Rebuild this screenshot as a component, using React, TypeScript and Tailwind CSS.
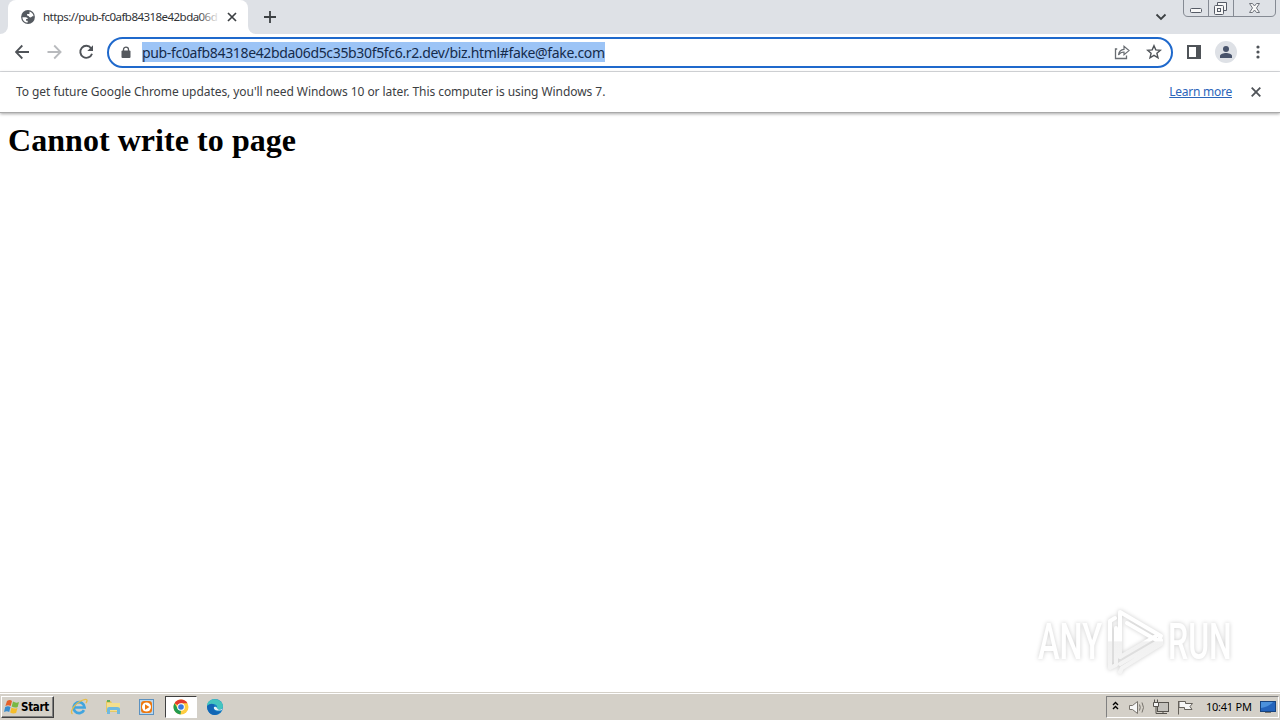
import React from "react";

const UI_FONT = "font-['Noto_Sans','Open_Sans',sans-serif]";

const TabStrip = () => (
  <div className="flex h-[34px] bg-[#dee1e6]">
    <div className="flex w-2 items-end bg-white">
      <div className="h-full w-full rounded-br-lg bg-[#dee1e6]" />
    </div>
    <div className="flex w-60 items-center rounded-t-lg bg-white pl-[13px]">
      <svg width="14" height="14" viewBox="0 0 14 14" className="shrink-0">
        <circle cx="7" cy="7" r="6.9" fill="#555a60" />
        <path
          d="M1.4 7.2H4.8C6 7.2 6.8 8 6.8 9.1H5.1V10.7H6.7V12.6C3.7 12.6 1.4 10.2 1.4 7.2ZM8.6 1.6C10.8 2.3 12.3 4 12.6 6.3H11.1C10.6 8.1 7.8 7.5 7.7 6.1C6.1 6.2 5.6 5 6.2 4.1H8.4Z"
          fill="#fff"
        />
      </svg>
      <div className="relative ml-2 w-[175px] whitespace-nowrap text-[11.5px] leading-4 tracking-[-0.54px] text-[#303236]">
        https://pub-fc0afb84318e42bda06d
        <div className="absolute inset-y-0 right-0 w-5 bg-gradient-to-r from-transparent to-white/90" />
      </div>
      <svg width="10" height="10" viewBox="0 0 10 10" className="ml-[9px] shrink-0">
        <path d="M1 1L9 9M9 1L1 9" stroke="#3c4043" strokeWidth="1.7" />
      </svg>
    </div>
    <div className="w-2 bg-white">
      <div className="h-full w-full rounded-bl-lg bg-[#dee1e6]" />
    </div>
    <svg width="12" height="12" viewBox="0 0 12 12" className="mt-[11px] ml-2">
      <path d="M6 0V12M0 6H12" stroke="#3c4043" strokeWidth="1.8" />
    </svg>
    <svg width="12" height="8" viewBox="0 0 12 8" className="mt-[13px] ml-auto">
      <path d="M1.5 1.5L6 6L10.5 1.5" fill="none" stroke="#3c4043" strokeWidth="1.8" />
    </svg>
    <svg width="93" height="17" viewBox="0 0 93 17" className="mr-1 ml-4" fill="none">
      <path d="M.5 0V12Q.5 16.5 5 16.5H88Q92.5 16.5 92.5 12V0M25.5 0V16M50.5 0V16" stroke="#858a93" />
      <rect x="7.5" y="8.5" width="11" height="4" rx="1" fill="#f7f7f7" stroke="#565b66" />
      <path d="M34.5 5.5V2.5H43.5V10.5H40.5" fill="#f7f7f7" stroke="#565b66" />
      <rect x="31.5" y="5.5" width="9" height="9" rx="1" fill="#f7f7f7" stroke="#565b66" />
      <rect x="34.5" y="8.5" width="3" height="3" stroke="#565b66" />
      <path
        d="M66.5 3.5H69.5L71.5 6L73.5 3.5H76.5L73.5 8L76.5 12.5H73.5L71.5 10L69.5 12.5H66.5L69.5 8Z"
        fill="#f7f7f7"
        stroke="#70747c"
      />
    </svg>
  </div>
);

const Toolbar = () => (
  <div className="flex h-[38px] items-center border-b border-[#dadce0] bg-white pl-[15px]">
    <svg width="80" height="16" viewBox="0 0 80 16" fill="none" className="mb-px shrink-0">
      <path d="M14 8H1M7.3 1.5L.9 8L7.3 14.5" stroke="#4f5358" strokeWidth="1.8" />
      <path d="M32.5 8H45.3M39.2 1.5L45.6 8L39.2 14.5" stroke="#b8babd" strokeWidth="1.8" />
      <path d="M76.1 4.2A6 6 0 1 0 77 9.7" stroke="#4f5358" strokeWidth="1.9" />
      <path d="M78 1.3V7H72.3Z" fill="#4f5358" />
    </svg>
    <div className="ml-3 flex h-[31px] w-[1066px] shrink-0 items-center rounded-full border-2 border-[#1f69cc] pl-3">
      <svg width="10" height="13" viewBox="0 0 10 13" className="mb-px shrink-0">
        <path d="M2.5 5V3.4C2.5 .3 7.5 .3 7.5 3.4V5" fill="none" stroke="#55595e" strokeWidth="1.3" />
        <rect y="4.5" x=".5" width="9" height="7.5" rx="1" fill="#55595e" />
      </svg>
      <span className="mb-px ml-[11px] h-5 w-[463px] whitespace-nowrap bg-[#9cc4f6] text-[14px] leading-[21px] tracking-[-0.34px] text-[#152b4b]">
        pub-fc0afb84318e42bda06d5c35b30f5fc6.r2.dev/biz.html#fake@fake.com
      </span>
      <svg width="16" height="16" viewBox="0 0 16 16" fill="none" className="mr-4 mb-px ml-auto">
        <path d="M3.2 5H1.5V14.5H12.5V11.5" stroke="#696d72" strokeWidth="1.3" />
        <path d="M4.5 11C5 7 7.5 5.4 10 5.3V2.3L15 6.6L10 10.8V8C7.5 8 5.8 9 4.5 11Z" stroke="#696d72" strokeWidth="1.2" />
      </svg>
      <svg width="16" height="16" viewBox="0 0 16 16" fill="none" className="mr-[9px] mb-px">
        <path
          d="M8 1.7L9.8 5.9L14.4 6.3L10.9 9.3L12 13.8L8 11.4L4 13.8L5.1 9.3L1.6 6.3L6.2 5.9Z"
          stroke="#4f5358"
          strokeWidth="1.4"
        />
      </svg>
    </div>
    <svg width="14" height="14" viewBox="0 0 14 14" className="mb-px ml-[14px]">
      <path d="M0 0H14V14H0ZM2 2V12H9V2Z" fill="#4f5358" fillRule="evenodd" />
    </svg>
    <svg width="22" height="22" viewBox="0 0 22 22" className="mb-px ml-[14px]">
      <circle cx="11" cy="11" r="11" fill="#dee1e6" />
      <circle cx="11" cy="8" r="3" fill="#48536b" />
      <path d="M5 17V15C5 13 8.5 12 11 12S17 13 17 15V17Z" fill="#48536b" />
    </svg>
    <svg width="4" height="14" viewBox="0 0 4 14" className="mb-px ml-[19px]" fill="#4f5358">
      <circle cx="2" cy="2" r="1.6" />
      <circle cx="2" cy="7" r="1.6" />
      <circle cx="2" cy="12" r="1.6" />
    </svg>
  </div>
);

const InfoBar = () => (
  <div className="flex h-[41px] items-center border-b border-[#a9a9a9] bg-white pl-4 text-[12px] leading-4 shadow-[0_1px_3px_rgba(0,0,0,0.35)]">
    <span className="mb-px whitespace-nowrap tracking-[-0.06px] text-[#3c4043]">
      To get future Google Chrome updates, you'll need Windows 10 or later. This computer is using Windows 7.
    </span>
    <a className="mr-[19px] mb-px ml-auto whitespace-nowrap tracking-[-0.25px] text-[#2b65ba] underline">Learn more</a>
    <svg width="10" height="10" viewBox="0 0 10 10" className="mr-[19px]">
      <path d="M.7 .7L9.3 9.3M9.3 .7L.7 9.3" stroke="#4f5358" strokeWidth="1.8" />
    </svg>
  </div>
);

const Watermark = () => (
  <svg
    width="204"
    height="68"
    viewBox="0 0 204 68"
    className="absolute right-[42px] bottom-[17px] drop-shadow-[0_0_2px_rgba(0,0,0,0.2)]"
    fill="none"
  >
    <defs>
      <linearGradient id="fade" x1="0" y1="0" x2="0" y2="68" gradientUnits="userSpaceOnUse">
        <stop offset="0.48" stopColor="#fff" />
        <stop offset="0.5" stopColor="#f1f1f1" />
        <stop offset="1" stopColor="#f5f5f5" />
      </linearGradient>
    </defs>
    <g fill="url(#fade)" fontFamily="Roboto, sans-serif" fontSize="50" fontWeight="500">
      <text transform="translate(4 51) scale(.65 1)">ANY</text>
      <text transform="translate(134 51) scale(.64 1)">RUN</text>
    </g>
    {/* Two nested play outlines */}
    <g stroke="url(#fade)" strokeWidth="4" strokeLinecap="round" strokeLinejoin="round">
      <path d="M86 49V4L127 28L124 33L93 15" />
      <path d="M81 10L76 13V60L82 57V20" />
      <path d="M86 49L122 28M86 56L127 32V36L88 60L86 64" />
    </g>
  </svg>
);

const TaskBar = () => (
  <div className="flex h-[27px] items-center border-t border-white bg-[#d4d0c8] shadow-[0_-1px_0_#d4d0c8]">
    <div className="ml-px flex h-[22px] w-[53px] shrink-0 items-center border border-t-white border-r-[#404040] border-b-[#404040] border-l-white pl-[2px] shadow-[inset_-1px_-1px_#808080]">
      <svg width="16" height="16" viewBox="0 0 16 16" className="shrink-0">
        <path d="M3 2Q6 .2 8 2L6.7 7Q4 5.7 1.4 7Z" fill="#e56028" />
        <path d="M9 2.5Q12 4.5 15 3L13.7 8Q11 9.3 7.7 7.5Z" fill="#79b843" />
        <path d="M1.2 8Q4 6.6 6.5 8L5.2 13Q3 11.7 0 13Z" fill="#388cce" />
        <path d="M7.5 8.5Q10 10.4 13.5 9L12.1 14Q9 15.2 6.2 13.5Z" fill="#f5bd2b" />
      </svg>
      <span className="ml-px pt-px font-['DejaVu_Sans_Condensed','DejaVu_Sans',sans-serif] text-[11.5px] font-bold tracking-[-0.3px] text-black">
        Start
      </span>
    </div>
    {/* Internet Explorer */}
    <svg width="18" height="18" viewBox="0 0 18 18" className="ml-4 shrink-0" fill="none">
      <path d="M14 12.2A5.5 5.5 0 1 1 14.6 9.5H4.5" stroke="#41a5df" strokeWidth="2.7" />
      <path d="M2.5 16C-1 14 5 5 13 2C18 0 17.5 3 16 5" stroke="#e6bd48" strokeWidth="1.3" />
    </svg>
    {/* Windows Explorer */}
    <svg width="18" height="18" viewBox="0 0 18 18" className="ml-4 shrink-0">
      <path d="M2 3H7L8 5H15V14H2Z" fill="#e5c965" />
      <path d="M3 2H6V4H3Z" fill="#62ac58" />
      <path d="M3 5H16V13H3Z" fill="#f5df8d" />
      <path d="M3 16V11Q3 9 5 9H13Q16 9 16 11V16H13V12H6V16Z" fill="#70b9df" />
    </svg>
    {/* Media Player */}
    <svg width="18" height="18" viewBox="0 0 18 18" className="ml-4 shrink-0">
      <rect x="1.5" y="1.5" width="14" height="15" fill="#b9d8ef" stroke="#5b91c0" />
      <rect x="3" y="3" width="11" height="12" rx="3" fill="#ed780f" />
      <circle cx="8.5" cy="9" r="4.5" fill="#fff" />
      <path d="M7 6.2V11.8L11.5 9Z" fill="#ed780f" />
    </svg>
    <div className="ml-[9px] flex h-[22px] w-8 shrink-0 items-center justify-center border border-t-[#404040] border-r-white border-b-white border-l-[#404040] bg-white">
      <svg width="16" height="16" viewBox="0 0 16 16">
        <circle cx="8" cy="8" r="7.5" fill="#ffcd40" />
        <path d="M8 8L1.5 4.2A7.5 7.5 0 0 1 14.5 4.2H8Z" fill="#e33b2e" />
        <path d="M1.5 4.2L5 10L8 11.5L7.5 15.5A7.5 7.5 0 0 1 1.5 4.2Z" fill="#229b50" />
        <circle cx="8" cy="8" r="3.8" fill="#fff" />
        <circle cx="8" cy="8" r="2.8" fill="#3979df" />
      </svg>
    </div>
    {/* Edge */}
    <svg width="18" height="18" viewBox="0 0 18 18" className="ml-[9px]">
      <circle cx="9" cy="9" r="8" fill="#1683c6" />
      <path d="M1 8C1-1 16-1 17 8C17 12 12 13 11 10C12 7 8 4 1 8Z" fill="#44c5bf" />
      <path d="M1 8C5 4 10 6 8 9C7 14 12 14 15.5 13C9 21 1 16 1 8Z" fill="#1266b5" />
      <path d="M8 9C7 12 11 13.5 16 12L17 9C17 12 12 13 11 10Q10 8 8 9Z" fill="#e8f4f6" />
    </svg>
    <div className="mr-px ml-auto flex h-[22px] w-[173px] items-center border border-t-[#808080] border-r-white border-b-white border-l-[#808080]">
      <svg width="90" height="18" viewBox="0 0 90 18" fill="none" className="shrink-0">
        <path d="M6 7L8.5 4.5L11 7M6 11L8.5 8.5L11 11" stroke="#000" strokeWidth="1.4" />
        <path d="M22.5 7.5H25.5L30.5 3.5V15.5L25.5 11.5H22.5Z" fill="#f7f7f7" stroke="#77736c" />
        <path d="M32.5 6.5Q34 9.5 32.5 12.5M35 4.5Q38 9.5 35 14.5" stroke="#77736c" />
        <rect x="50.5" y="4.5" width="11" height="9" fill="#c3c1bc" stroke="#55524d" />
        <path d="M47.5 1.5V4.5M50.5 1.5V4.5M46.5 4.5H51.5V8.5H46.5Z" fill="#f5f5f5" stroke="#55524d" />
        <path d="M49 9V15.5H60M56 14V16" stroke="#55524d" />
        <path d="M71.5 16.5V3M72 3.5H78.5V5.5H85.5L83 8.5L85 11.5H77.5V9.5H72Z" fill="#f6f6f6" stroke="#65615b" />
      </svg>
      <span className="ml-[9px] w-[47px] whitespace-nowrap text-[11px] tracking-[-0.25px] text-black">10:41 PM</span>
      <svg width="16" height="14" viewBox="0 0 16 14" className="ml-[7px] shrink-0">
        <rect x=".5" y="1.5" width="15" height="10" fill="#2464bc" stroke="#17447f" />
        <path d="M1 2H13Q9 7 1 8Z" fill="#4b91dc" />
        <path d="M5 12H11V13H5Z" fill="#77736c" />
      </svg>
    </div>
  </div>
);

const App = () => {
  return (
    <div className={`flex h-screen w-screen flex-col overflow-hidden bg-white ${UI_FONT}`}>
      <TabStrip />
      <Toolbar />
      <InfoBar />
      <main className="relative flex-1 px-2 pt-[9px]">
        <h1 className="font-['Liberation_Serif',serif] text-[32px] leading-9 font-bold tracking-[0.05px] text-black">
          Cannot write to page
        </h1>
        <Watermark />
      </main>
      <TaskBar />
    </div>
  );
};

export default App;
